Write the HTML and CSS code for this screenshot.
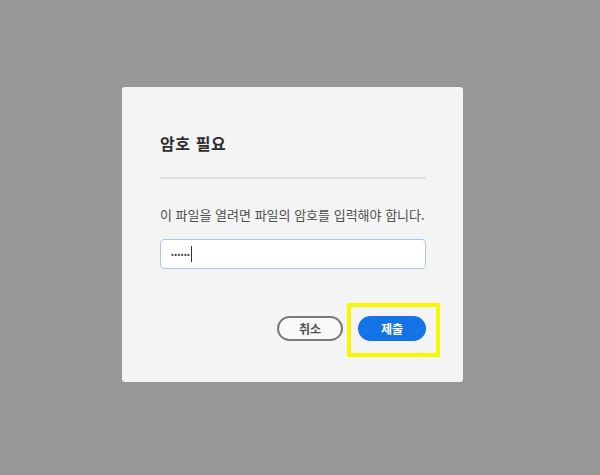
FILE: index.html
```html
<!DOCTYPE html>
<html lang="ko">
<head>
<meta charset="utf-8">
<link rel="stylesheet" href="styles.css">
</head>
<body>
<div class="dialog">
  <h1 class="title">암호 필요</h1>
  <div class="divider"></div>
  <p class="message">이 파일을 열려면 파일의 암호를 입력해야 합니다.</p>
  <div class="field"><span class="dots">••••••</span><span class="caret"></span></div>
  <div class="actions">
    <button class="btn btn-cancel">취소</button>
    <span class="highlight"><button class="btn btn-submit">제출</button></span>
  </div>
</div>
</body>
</html>
```

FILE: styles.css
```css
html, body { margin: 0; padding: 0; }
body {
  background: #979797;
  width: 600px;
  height: 475px;
  padding: 87px 0 0 122px;
  box-sizing: border-box;
  font-family: "Noto Sans CJK KR", "Noto Sans", sans-serif;
}
.dialog {
  width: 341px;
  height: 295px;
  box-sizing: border-box;
  background: #f4f4f4;
  border-radius: 3px;
  padding: 45px 37px 0 38px;
}
.title {
  margin: 0;
  font-size: 16px;
  letter-spacing: 0.6px;
  line-height: 23px;
  font-weight: 700;
  color: #2e2e2e;
}
.divider {
  height: 2px;
  background: #e0e0e0;
  margin-top: 22px;
}
.message {
  margin: 27px 0 0;
  font-size: 13px;
  line-height: 18px;
  color: #4f4f4f;
}
.field {
  margin-top: 15px;
  height: 30px;
  box-sizing: border-box;
  background: #fff;
  border: 1.5px solid #a9c6ec;
  border-radius: 4px;
  display: flex;
  align-items: center;
  padding-left: 10px;
}
.dots {
  font-size: 8px;
  letter-spacing: 0.5px;
  color: #444;
  line-height: 1;
}
.caret {
  width: 1px;
  height: 16px;
  background: #333;
  margin-left: 1px;
}
.actions {
  margin-top: 47px;
  display: flex;
  justify-content: flex-end;
  gap: 15px;
}
.btn {
  height: 25px;
  border-radius: 13px;
  font-family: inherit;
  font-size: 12px;
  font-weight: 700;
  padding: 0;
  display: flex;
  align-items: center;
  justify-content: center;
}
.btn-cancel {
  width: 66px;
  background: #f8f8f8;
  border: 2px solid #7a7a7a;
  color: #505050;
}
.btn-submit {
  width: 68px;
  background: #1473e6;
  border: none;
  color: #fff;
}
.highlight {
  position: relative;
  display: block;
}
.highlight::after {
  content: "";
  position: absolute;
  left: -11px;
  top: -13px;
  right: -14px;
  bottom: -16px;
  border: 4px solid #f7f700;
}
```
